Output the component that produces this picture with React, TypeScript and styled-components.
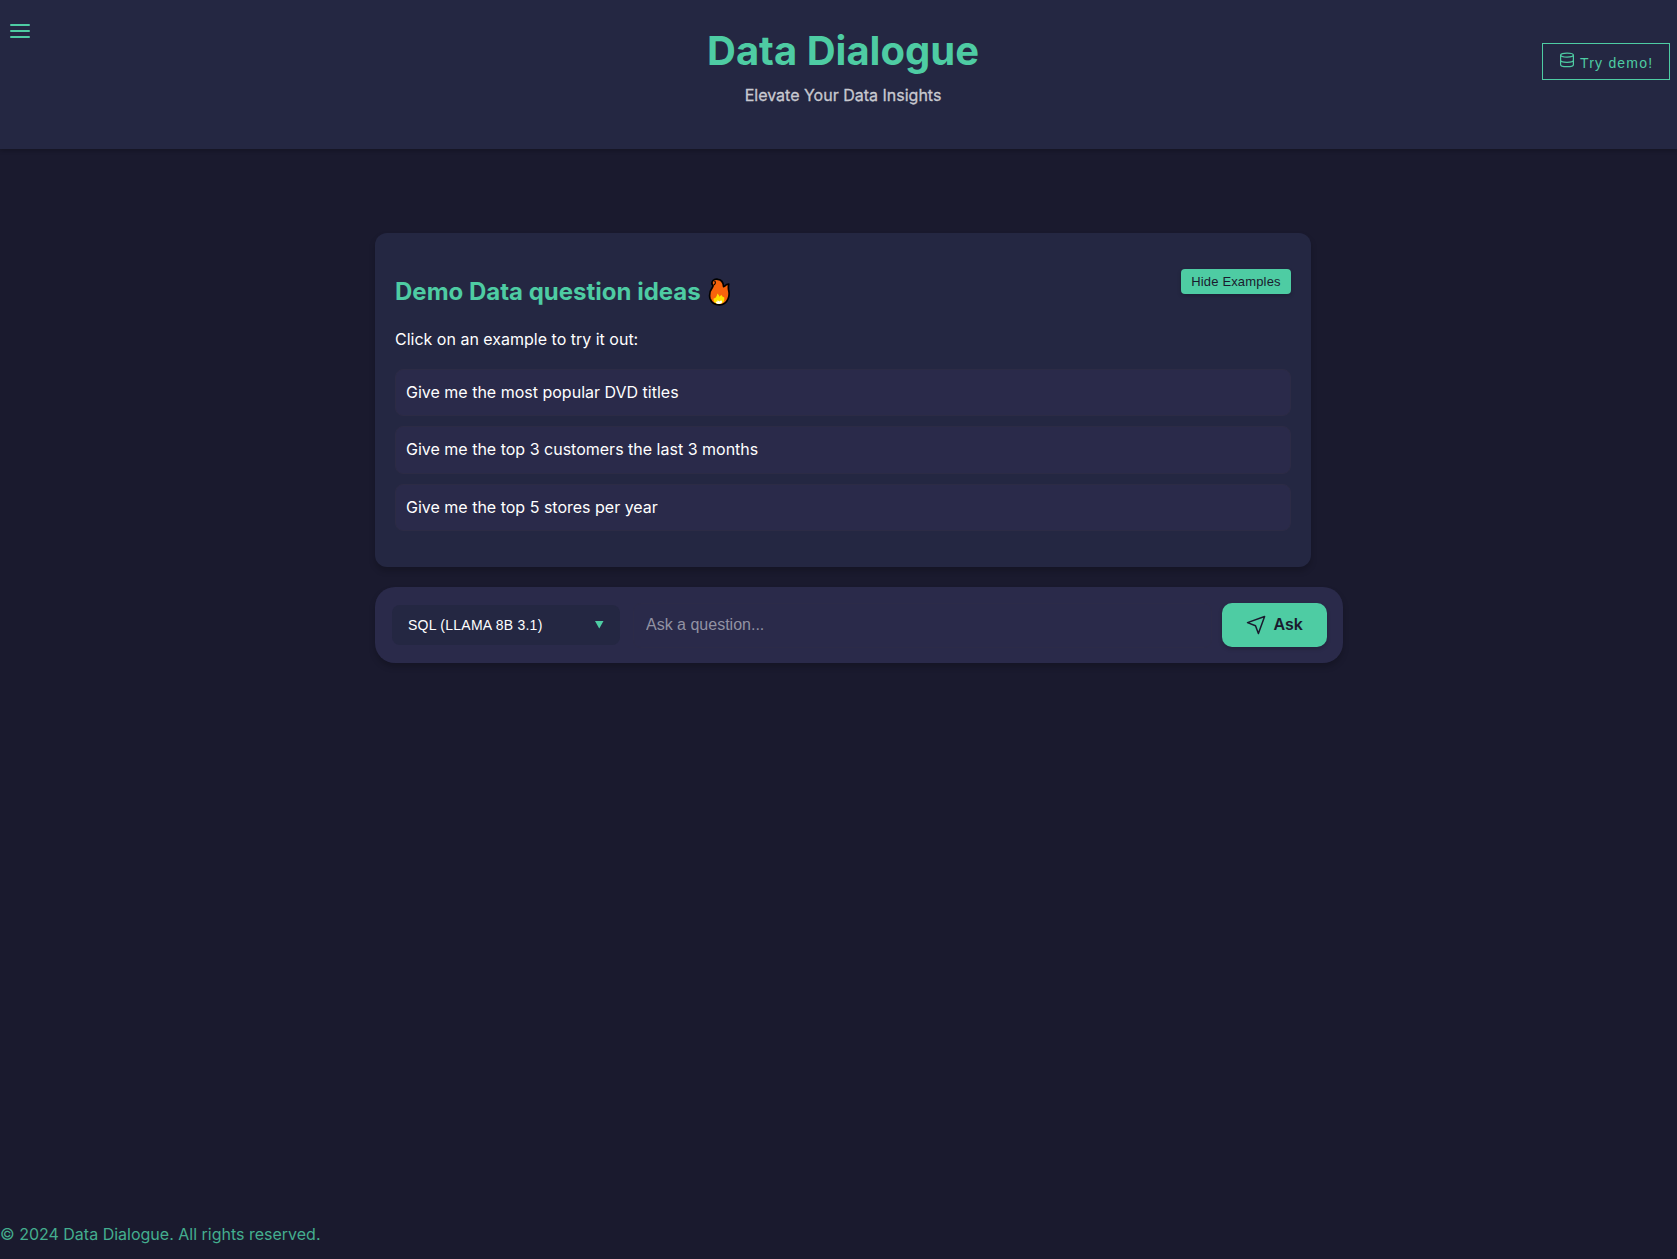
import React from "react";
import styled, { createGlobalStyle } from "styled-components";

const GlobalStyle = createGlobalStyle`
  * { box-sizing: border-box; }
  body {
    margin: 0;
    background: #1a1a2e;
    color: #fff;
    font-family: Inter, sans-serif;
    font-size: 16px;
    line-height: 1.6;
    overflow: hidden;
  }
`;

const Page = styled.div`
  height: 1259px;
  display: flex;
  flex-direction: column;
`;

const Header = styled.header`
  height: 149px;
  flex: none;
  display: grid;
  grid-template-columns: 200px 1fr 200px;
  background: #242742;
  box-shadow: 0 2px 4px rgba(0, 0, 0, 0.2);
  padding: 0 7px 0 10px;
`;

const MenuButton = styled.button`
  display: flex;
  flex-direction: column;
  gap: 4px;
  width: 20px;
  height: 14px;
  margin: 24px 0 0;
  padding: 0;
  border: 0;
  background: none;
`;

const MenuLine = styled.span`
  height: 2px;
  width: 20px;
  border-radius: 1px;
  background: #4ecca3;
`;

const Brand = styled.div`
  display: flex;
  flex-direction: column;
  align-items: center;
  padding: 19px 0 0 6px;
`;

const Title = styled.h1`
  margin: 0;
  font-size: 40px;
  line-height: 64px;
  font-weight: 700;
  color: #4ecca3;
`;

const Tagline = styled.p`
  margin: -1px 0 0;
  line-height: 26px;
  color: #c8c9d0;
  -webkit-text-stroke: 0.3px #c8c9d0;
`;

const DemoButton = styled.button`
  justify-self: end;
  display: flex;
  align-items: center;
  gap: 5px;
  width: 128px;
  height: 37px;
  margin: 43px 0 0;
  padding: 0 0 0 16px;
  border: 1px solid #4ecca3;
  background: none;
  color: #4ecca3;
  font: 14px "Liberation Sans", sans-serif;
  letter-spacing: 1.2px;
  white-space: nowrap;

  svg { margin-top: -3px; flex: none; }
  span { padding-top: 3px; }
`;

const Main = styled.main`
  flex: 1;
  display: flex;
  flex-direction: column;
  gap: 20px;
  padding: 84px 0 0 375px;
`;

const Card = styled.section`
  width: 936px;
  height: 334px;
  padding: 36px 20px 20px;
  border-radius: 12px;
  background: #242742;
  box-shadow: 0 4px 6px rgba(0, 0, 0, 0.2);
`;

const CardHeader = styled.div`
  display: flex;
  justify-content: space-between;
  align-items: flex-start;
  height: 51px;
`;

const CardTitle = styled.h2`
  display: flex;
  align-items: center;
  gap: 7px;
  margin: 4px 0 0;
  font-size: 24px;
  line-height: 38px;
  font-weight: 700;
  color: #4ecca3;
`;

const HideButton = styled.button`
  width: 110px;
  height: 25px;
  padding: 0;
  border: 0;
  border-radius: 4px;
  background: #4ecca3;
  color: #1a1a2e;
  font: 13px "Liberation Sans", sans-serif;
  letter-spacing: 0.15px;
  box-shadow: 0 2px 4px rgba(0, 0, 0, 0.2);
`;

const Hint = styled.p`
  margin: 6px 0 16.6px;
  line-height: 26px;
`;

const Examples = styled.ul`
  display: flex;
  flex-direction: column;
  gap: 10px;
  margin: 0;
  padding: 0;
  list-style: none;
`;

const Example = styled.li`
  height: 47.6px;
  padding: 10px;
  border: 1px solid #2c2b45;
  border-radius: 8px;
  background: #2a2a4a;
  line-height: 25.6px;
`;

const AskBar = styled.form`
  display: flex;
  align-items: center;
  width: 968px;
  height: 76px;
  padding: 0 16px 0 17px;
  border-radius: 20px;
  background: #2a2a4a;
  box-shadow: 0 4px 6px rgba(0, 0, 0, 0.2);
`;

const ModelSelect = styled.div`
  display: flex;
  align-items: center;
  justify-content: space-between;
  width: 228px;
  height: 40px;
  padding: 0 16px;
  border-radius: 8px;
  background: #242742;
  font: 14px "Liberation Sans", sans-serif;
  letter-spacing: 0.24px;
`;

const QuestionInput = styled.input`
  flex: 1;
  min-width: 0;
  height: 45px;
  margin: 0 10px 0 13px;
  padding: 0 12px;
  border: 1px solid #2c2b48;
  border-radius: 8px;
  background: transparent;
  color: #fff;
  font: 16px "Liberation Sans", sans-serif;

  &::placeholder { color: #9292a3; }
`;

const AskButton = styled.button`
  display: flex;
  align-items: center;
  gap: 7.5px;
  width: 105px;
  height: 44px;
  padding: 0 0 0 24px;
  border: 0;
  border-radius: 10px;
  background: #4ecca3;
  color: #1a1a2e;
  font: 600 16px Inter, sans-serif;
  box-shadow: 0 2px 4px rgba(0, 0, 0, 0.2);

  span { padding-bottom: 2px; }
`;

const Footer = styled.footer`
  height: 38px;
  flex: none;
  line-height: 26px;
  color: #44ae8f;
`;

const DatabaseIcon = () => (
  <svg width="16" height="16" viewBox="0 0 16 16" fill="none" stroke="#4ecca3" strokeWidth="1.2">
    <ellipse cx="8" cy="3.1" rx="6.4" ry="2" />
    <path d="M1.600 3.100v9.600c0 1.200 2.600 2 6.400 2s6.400-.8 6.400-2V3.100M1.600 8.300c0 1.200 2.600 2 6.400 2s6.400-.8 6.400-2" />
  </svg>
);

const FlameIcon = () => (
  <svg width="22" height="28" viewBox="0 0 22 28">
    <path
      d="M5 2.500C6.500 1 8 .9 10 1.300C13.500 1.700 15.300 4.500 15.600 8.600C17 8.200 17.800 7.400 18.600 6.500L20.800 6C20.200 8 20.300 10 20.600 12C21.400 15 21.100 18.300 20.200 20.500C18.500 24.800 15.500 26.800 11.400 26.800C6.500 26.800 3.300 24.500 2 20.500C1 16.700 1.800 13 4.500 9.300C5 8.600 5.100 8 5 7.300C3.500 6 3.800 4 5 2.500Z"
      fill="#f7630c" stroke="#000" strokeWidth="1.7" strokeLinejoin="round"
    />
    <path d="M6.500 3c1.300.9 1.200 2.700-.6 4" fill="none" stroke="#000" strokeWidth="1.1" />
    <path d="M9.200 15.500c1.300.8 2 1.900 2.300 3.200l1.900-1.900c.5 1.400 1.500 2.200 2.800 2.500.8 3.700-1.200 6.600-5 6.600s-6.200-2.300-5.600-5.500l1.700-.3C8.300 18.700 9.300 17.300 9.200 15.500Z" fill="#fce100" />
    <path d="M9.500 22.300l2 1.200 1.600-1.200c1.800 1.600.8 3.700-1.800 3.700-2.700 0-3.900-1-3.300-2.500L9.300 24Z" fill="#fff" />
  </svg>
);

const SendIcon = () => (
  <svg width="20" height="20" viewBox="0 0 20 20" fill="none" stroke="#1a1a2e" strokeWidth="1.5" strokeLinejoin="round">
    <path d="M1.500 7.600 18.600 1.500 12.400 18.500 9.500 10.800Z" />
  </svg>
);

const examples = [
  "Give me the most popular DVD titles",
  "Give me the top 3 customers the last 3 months",
  "Give me the top 5 stores per year",
];

export default function App() {
  return (
    <Page>
      <GlobalStyle />
      <Header>
        <MenuButton type="button" aria-label="Menu">
          <MenuLine /><MenuLine /><MenuLine />
        </MenuButton>
        <Brand>
          <Title>Data Dialogue</Title>
          <Tagline>Elevate Your Data Insights</Tagline>
        </Brand>
        <DemoButton type="button"><DatabaseIcon /><span>Try demo!</span></DemoButton>
      </Header>
      <Main>
        <Card>
          <CardHeader>
            <CardTitle>Demo Data question ideas <FlameIcon /></CardTitle>
            <HideButton type="button">Hide Examples</HideButton>
          </CardHeader>
          <Hint>Click on an example to try it out:</Hint>
          <Examples>
            {examples.map((text) => <Example key={text}>{text}</Example>)}
          </Examples>
        </Card>
        <AskBar>
          <ModelSelect>
            SQL (LLAMA 8B 3.1)
            <svg width="9" height="8" viewBox="0 0 9 8"><path d="M0 0h8.500L4.250 7.500Z" fill="#4ecca3" /></svg>
          </ModelSelect>
          <QuestionInput placeholder="Ask a question..." />
          <AskButton type="button"><SendIcon /><span>Ask</span></AskButton>
        </AskBar>
      </Main>
      <Footer>© 2024 Data Dialogue. All rights reserved.</Footer>
    </Page>
  );
}
